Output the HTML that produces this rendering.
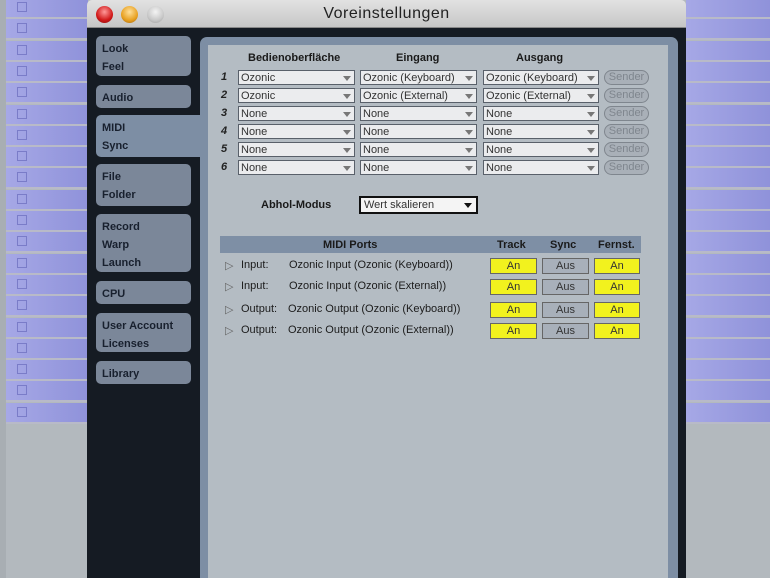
<!DOCTYPE html>
<html><head><meta charset="utf-8"><style>
*{margin:0;padding:0;box-sizing:border-box}
body{width:770px;height:578px;overflow:hidden;background:#b3b9be;position:relative;font-family:"Liberation Sans",sans-serif}
.a{position:absolute}
.row{position:absolute;height:19px;background:linear-gradient(90deg,#a6a8e6,#8f92da);border-bottom:2px solid #b8bac8}
.cb{position:absolute;left:11px;top:4px;width:10px;height:10px;border:1px solid #7a7cc8}
.tab{position:absolute;left:96px;width:95px;background:#7b8799;border-radius:5px;color:#18202e;font-weight:bold;font-size:11px;padding:4px 0 0 6px;line-height:18px}
.dd{position:absolute;height:15px;background:#ebecee;border:1px solid #59606a;font-size:11px;color:#333;padding-left:2px;line-height:14px;white-space:nowrap;overflow:hidden}
.dd:after{content:"";position:absolute;right:3px;top:5px;border-left:4px solid transparent;border-right:4px solid transparent;border-top:5px solid #777}
.num{position:absolute;left:221px;font-size:11px;font-weight:bold;font-style:italic;color:#222}
.snd{position:absolute;left:604px;width:45px;height:15px;border:1px solid #7f868e;border-radius:8px;background:#a9b0b8;color:#7f868e;font-size:11px;text-align:center;line-height:13px}
.hd{position:absolute;font-size:11px;font-weight:bold;color:#1a1a1a}
.b{position:absolute;height:16px;border:1px solid #666;font-size:11px;text-align:center;line-height:14px;color:#333}
.y{background:#f2f21e}.g{background:#a8b0ba}
.pt{position:absolute;font-size:11px;color:#1c1c1c}
</style></head><body>
<div class="a" style="left:0;top:0;width:6px;height:578px;background:#a8aeb3"></div>
<div id="L"></div>
<script>
var s="";for(var i=0;i<20;i++){var t=-2+i*21.3;s+='<div class="row" style="left:6px;top:'+t+'px;width:82px;height:21px"><div class="cb"></div></div><div class="row" style="left:686px;top:'+t+'px;width:84px;height:21px"></div>';}
document.getElementById('L').outerHTML=s;
</script>
<div class="a" style="left:87px;top:0;width:599px;height:28px;background:linear-gradient(#e2e2e2,#c6c6c6);border-radius:5px 5px 0 0;border-bottom:1px solid #888"></div>
<div class="a" style="left:96px;top:6px;width:17px;height:17px;border-radius:50%;background:radial-gradient(circle at 50% 35%,#f99,#d01818 60%,#801010)"></div>
<div class="a" style="left:121px;top:6px;width:17px;height:17px;border-radius:50%;background:radial-gradient(circle at 50% 35%,#ffe09a,#e8a020 60%,#9a6010)"></div>
<div class="a" style="left:147px;top:6px;width:17px;height:17px;border-radius:50%;background:radial-gradient(circle at 50% 35%,#f4f4f4,#c8c8c8 60%,#999)"></div>
<div class="a" style="left:87px;top:5px;width:599px;text-align:center;font-size:16px;color:#222;letter-spacing:.5px">Voreinstellungen</div>
<div class="a" style="left:87px;top:28px;width:599px;height:550px;background:#151b23"></div>
<div class="tab" style="top:36px;height:40px">Look<br>Feel</div>
<div class="tab" style="top:85px;height:23px">Audio</div>
<div class="tab" style="top:115px;height:42px;width:112px;background:#7d8ea4;border-radius:5px 0 0 5px">MIDI<br>Sync</div>
<div class="tab" style="top:164px;height:42px">File<br>Folder</div>
<div class="tab" style="top:214px;height:58px">Record<br>Warp<br>Launch</div>
<div class="tab" style="top:281px;height:23px">CPU</div>
<div class="tab" style="top:313px;height:39px">User Account<br>Licenses</div>
<div class="tab" style="top:361px;height:23px">Library</div>
<div class="a" style="left:200px;top:37px;width:478px;height:541px;background:#7d8ea4;border-radius:7px 7px 0 0"></div>
<div class="a" style="left:208px;top:45px;width:460px;height:533px;background:#b4bcc3"></div>
<div class="hd" style="left:248px;top:52px">Bedienoberfläche</div>
<div class="hd" style="left:396px;top:52px">Eingang</div>
<div class="hd" style="left:516px;top:52px">Ausgang</div>
<div id="R"></div>
<script>
var v=[["Ozonic","Ozonic (Keyboard)","Ozonic (Keyboard)"],["Ozonic","Ozonic (External)","Ozonic (External)"]];
var s="";for(var i=0;i<6;i++){var t=70+i*18;var r=v[i]||["None","None","None"];
s+='<div class="num" style="top:'+(t+1)+'px">'+(i+1)+'</div><div class="dd" style="left:238px;top:'+t+'px;width:117px">'+r[0]+'</div><div class="dd" style="left:360px;top:'+t+'px;width:117px">'+r[1]+'</div><div class="dd" style="left:483px;top:'+t+'px;width:116px">'+r[2]+'</div><div class="snd" style="top:'+t+'px">Sender</div>';}
document.getElementById('R').outerHTML=s;
</script>
<div class="hd" style="left:261px;top:199px">Abhol-Modus</div>
<div class="a" style="left:359px;top:196px;width:119px;height:18px;background:#f4f4f4;border:2px solid #111;font-size:11px;color:#333;padding-left:3px;line-height:14px">Wert skalieren<span style="position:absolute;right:4px;top:5px;border-left:4px solid transparent;border-right:4px solid transparent;border-top:5px solid #111"></span></div>
<div class="a" style="left:220px;top:236px;width:421px;height:17px;background:#7e8fa5"></div>
<div class="hd" style="left:323px;top:239px">MIDI Ports</div>
<div class="hd" style="left:497px;top:239px">Track</div>
<div class="hd" style="left:550px;top:239px">Sync</div>
<div class="hd" style="left:598px;top:239px">Fernst.</div>
<div id="P"></div>
<script>
var p=[["Input:","Ozonic Input (Ozonic (Keyboard))"],["Input:","Ozonic Input (Ozonic (External))"],["Output:","Ozonic Output (Ozonic (Keyboard))"],["Output:","Ozonic Output (Ozonic (External))"]];
var tt=[258,279,302,323];var s="";
for(var i=0;i<4;i++){var t=tt[i];
s+='<div class="pt" style="left:225px;top:'+(t+1)+'px;color:#666">&#9655;</div><div class="pt" style="left:241px;top:'+(t+1)+'px">'+p[i][0]+'</div><div class="pt" style="left:'+(i<2?289:288)+'px;top:'+(t+1)+'px">'+p[i][1]+'</div>';
s+='<div class="b y" style="left:490px;top:'+t+'px;width:47px">An</div><div class="b g" style="left:542px;top:'+t+'px;width:47px">Aus</div><div class="b y" style="left:594px;top:'+t+'px;width:46px">An</div>';}
document.getElementById('P').outerHTML=s;
</script>
</body></html>
